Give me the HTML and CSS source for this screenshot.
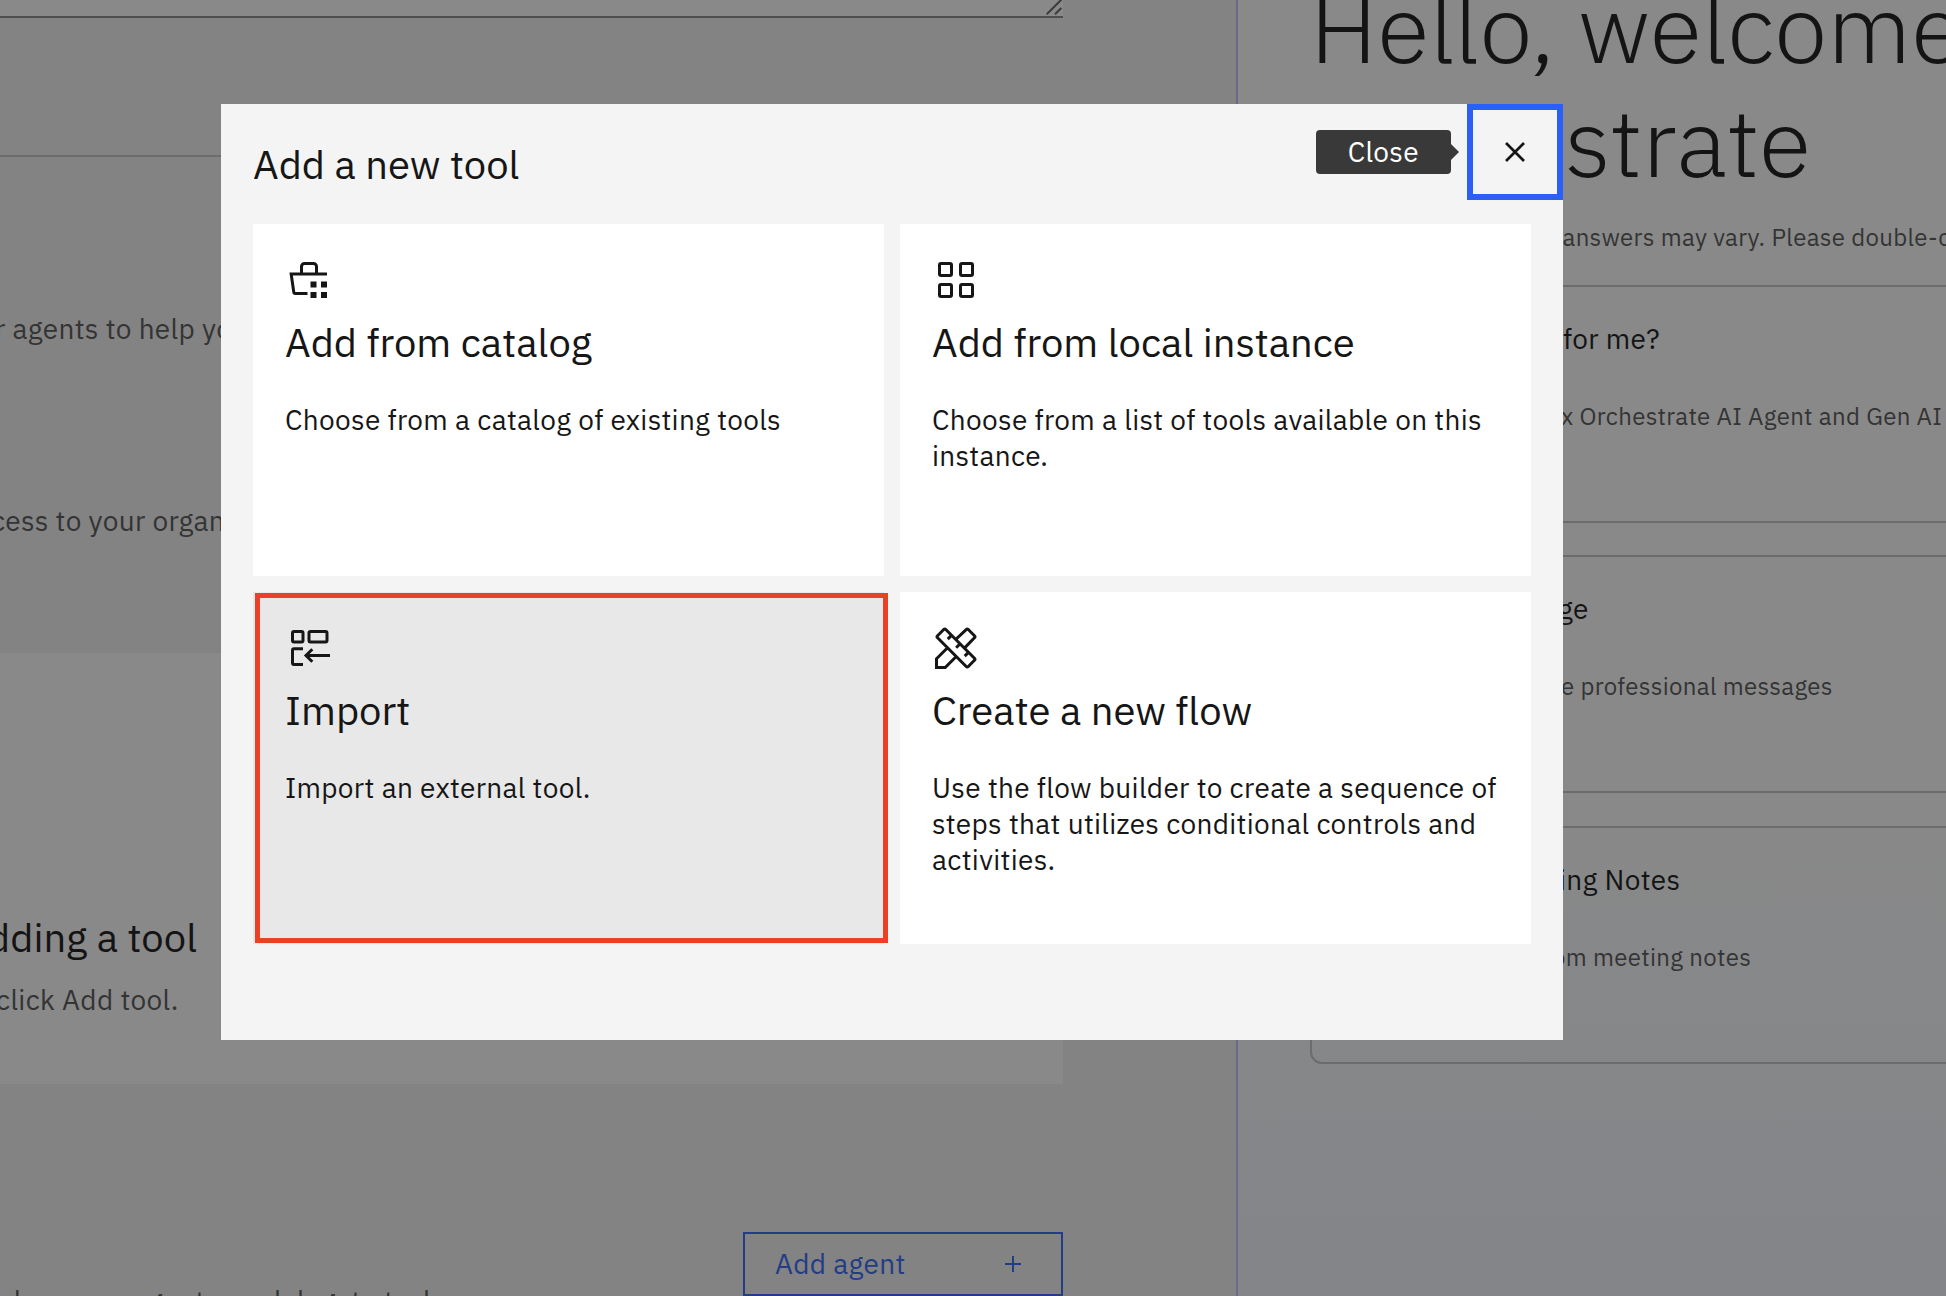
FILE: index.html
```html
<!DOCTYPE html>
<html lang="en">
<head>
<meta charset="utf-8">
<title>Add a new tool</title>
<link rel="stylesheet" href="styles.css">
</head>
<body>
<div class="page">
  <main class="editor">
    <div class="textarea">
      <svg class="resizer" width="17" height="16" viewBox="0 0 17 16"><path d="M.7 14.3L15.3-.3M9 14.3l6.3-6.3"/></svg>
    </div>
    <div class="rule"></div>
    <p class="body-text knowledge">r agents to help you</p>
    <p class="body-text toolset">cess to your organization</p>
    <section class="empty-state">
      <h3 class="empty-title">dding a tool</h3>
      <p class="body-text">click Add tool.</p>
    </section>
    <div class="agents-row">
      <p class="body-text agents-text">when your agent can delegate tasks</p>
      <button class="add-agent" type="button">
        <span>Add agent</span>
        <svg width="16" height="16" viewBox="0 0 16 16"><path d="M8 0v16M0 8h16"/></svg>
      </button>
    </div>
  </main>
  <aside class="preview">
    <h1 class="greeting">Hello, welcome to<br>Orchestrate</h1>
    <p class="small-text disclaimer">answers may vary. Please double-check</p>
    <div class="starters">
      <div class="starter">
        <h4 class="starter-title for-me">for me?</h4>
        <p class="small-text orchestrate">x Orchestrate AI Agent and Gen AI</p>
      </div>
      <div class="starter">
        <h4 class="starter-title message">ge</h4>
        <p class="small-text professional">e professional messages</p>
      </div>
      <div class="starter">
        <h4 class="starter-title notes">ing Notes</h4>
        <p class="small-text meeting">om meeting notes</p>
      </div>
    </div>
  </aside>
</div>

<div class="modal" role="dialog" aria-label="Add a new tool">
  <h2 class="modal-title">Add a new tool</h2>
  <div class="modal-actions">
    <div class="tooltip">Close</div>
    <button class="close" type="button" aria-label="Close">
      <svg width="22" height="22" viewBox="0 0 22 22"><path d="M2 2l18 18M20 2L2 20"/></svg>
    </button>
  </div>
  <div class="tiles">
    <article class="tile">
      <svg class="icon" viewBox="0 0 32 32"><path d="M28 12H4.1l1.75 12.1a1 1 0 0 0 1 .9H15M11 12V7a2 2 0 0 1 2-2h6a2 2 0 0 1 2 2v5"/><path class="solid" d="M17 17h4v4h-4zM24 17h4v4h-4zM17 24h4v4h-4zM24 24h4v4h-4z"/></svg>
      <h3 class="tile-title">Add from catalog</h3>
      <p class="tile-text">Choose from a catalog of existing tools</p>
    </article>
    <article class="tile">
      <svg class="icon" viewBox="0 0 32 32"><rect x="5" y="5" width="8" height="8" rx="1"/><rect x="19" y="5" width="8" height="8" rx="1"/><rect x="5" y="19" width="8" height="8" rx="1"/><rect x="19" y="19" width="8" height="8" rx="1"/></svg>
      <h3 class="tile-title">Add from local instance</h3>
      <p class="tile-text">Choose from a list of tools available on this instance.</p>
    </article>
    <article class="tile tile-hover">
      <svg class="icon" viewBox="0 0 32 32"><rect x="5" y="5" width="7" height="7" rx="1"/><rect x="16" y="5" width="12" height="7" rx="1"/><path d="M12 16.5H6a1 1 0 0 0-1 1V26a1 1 0 0 0 1 1h6M30 21H14.4M18.2 16.8L14 21l4.2 4.2"/></svg>
      <h3 class="tile-title">Import</h3>
      <p class="tile-text">Import an external tool.</p>
    </article>
    <article class="tile">
      <svg class="icon" viewBox="0 0 32 32"><path d="M7.8 3.7L3.7 7.8a1 1 0 0 0 0 1.4l19.1 19.1a1 1 0 0 0 1.4 0l4.1-4.1a1 1 0 0 0 0-1.4L9.2 3.7a1 1 0 0 0-1.4 0zM13 7.6L10.5 10.1M18.6 13.3L16.1 15.8M24.3 18.9L21.8 21.4M10.7 15.5L3 23.2V29h5.8l7.7-7.7M15.6 10.5l7.2-6.8a1 1 0 0 1 1.4 0l4.1 4.1a1 1 0 0 1 0 1.4l-7 7.2"/></svg>
      <h3 class="tile-title">Create a new flow</h3>
      <p class="tile-text">Use the flow builder to create a sequence of steps that utilizes conditional controls and activities.</p>
    </article>
  </div>
</div>
</body>
</html>
```
FILE: styles.css
```css
* { box-sizing: border-box; margin: 0; padding: 0; }

body {
  width: 1946px;
  height: 1296px;
  overflow: hidden;
  position: relative;
  font-family: "IBM Plex Sans", Roboto, "Noto Sans", sans-serif;
  font-size: 28px;
  line-height: 36px;
  letter-spacing: 0.32px;
  color: #161616;
}

h1, h2, h3, h4 { font-weight: 400; }
svg { display: block; fill: none; stroke: currentColor; stroke-width: 2; }

/* Dimmed page behind the dialog */
.page {
  display: flex;
  height: 1296px;
  overflow: hidden;
  color: #141414;
}

.editor {
  width: 1236px;
  flex: none;
  height: 1296px;
  overflow: hidden;
  display: flex;
  flex-direction: column;
  background: #838383;
  padding-right: 173px;
}
.editor > * { flex: none; }

.textarea {
  height: 18px;
  background: #898989;
  border-bottom: 2px solid #4e4e4e;
  display: flex;
  justify-content: flex-end;
}
.resizer { color: #3c3c3c; }

.rule { height: 2px; margin-top: 137px; background: #6c6c6c; }

.body-text { color: #343434; white-space: nowrap; }
.knowledge { margin: 154px 0 0 -5px; }
.toolset { margin: 156px 0 0 -9px; }

.empty-state {
  margin-top: 114px;
  height: 431px;
  padding-top: 256px;
  background: #898989;
}
.empty-title {
  font-size: 40px;
  line-height: 56px;
  letter-spacing: 0;
  margin: 0 0 17px -13px;
}
.empty-state .body-text { margin-left: -4px; }

.agents-row {
  display: flex;
  justify-content: space-between;
  align-items: flex-start;
  margin-top: 148px;
}
.agents-text { margin: 51px 0 0 -8px; }

.add-agent {
  display: flex;
  justify-content: space-between;
  align-items: center;
  width: 320px;
  height: 64px;
  padding: 0 40px 0 30px;
  border: 2px solid #233c86;
  background: none;
  color: #233c86;
  font: inherit;
  letter-spacing: inherit;
}

.preview {
  flex: 1;
  min-width: 0;
  border-left: 2px solid #6a6a8a;
  padding-left: 72px;
  background: linear-gradient(#898989 60%, #868789 80%, #848588);
  overflow: hidden;
}
.greeting {
  margin-top: -30px;
  font-size: 96px;
  line-height: 114px;
  font-weight: 300;
  letter-spacing: 0;
  white-space: nowrap;
}
.small-text {
  font-size: 24px;
  line-height: 32px;
  color: #343434;
  white-space: nowrap;
}
.disclaimer { margin: 23px 0 32px 252.5px; }

.starters { display: flex; flex-direction: column; gap: 32.4px; }
.starter {
  width: 700px;
  height: 238px;
  padding-top: 34px;
  border: 2px solid #6c6c6c;
  border-radius: 12px;
}
.starter-title { font-size: 28px; line-height: 36px; margin-bottom: 43px; }
.for-me { padding-left: 251px; }
.orchestrate { padding-left: 249px; }
.message { padding-left: 246px; }
.professional { padding-left: 249px; }
.notes { padding-left: 247px; }
.meeting { padding-left: 240px; }

/* Dialog */
.modal {
  position: absolute;
  left: 221px;
  top: 104px;
  width: 1342px;
  height: 936px;
  padding: 32px;
  background: #f4f4f4;
}
.modal-title {
  font-size: 40px;
  line-height: 56px;
  letter-spacing: 0;
  margin-bottom: 32px;
}
.modal-actions {
  position: absolute;
  top: 0;
  right: 0;
  display: flex;
  align-items: center;
  gap: 16px;
}
.tooltip {
  position: relative;
  height: 44px;
  padding: 0 32px;
  line-height: 44px;
  border-radius: 4px;
  background: #393939;
  color: #fff;
}
.tooltip::after {
  content: "";
  position: absolute;
  left: 100%;
  top: 14px;
  border: 8px solid transparent;
  border-left-color: #393939;
  border-right-width: 0;
}
.close {
  width: 96px;
  height: 96px;
  display: flex;
  align-items: center;
  justify-content: center;
  border: 6px solid #2b60f6;
  background: none;
  color: #161616;
}
.close svg { stroke-width: 2.7; }

.tiles {
  display: grid;
  grid-template-columns: 631px 631px;
  grid-auto-rows: 352px;
  gap: 16px;
}
.tile { position: relative; padding: 32px; background: #fff; }
.tile-hover { background: #e8e8e8; }
.tile-hover::after {
  content: "";
  position: absolute;
  inset: 1px -4px 1px 2px;
  border: 5px solid #ea4025;
}
.icon { width: 48px; height: 48px; }
.icon .solid { fill: currentColor; stroke: none; }
.tile-title {
  font-size: 40px;
  line-height: 56px;
  letter-spacing: 0;
  margin: 10px 0 32px;
}
.tile-text { margin-right: -10px; }
```
